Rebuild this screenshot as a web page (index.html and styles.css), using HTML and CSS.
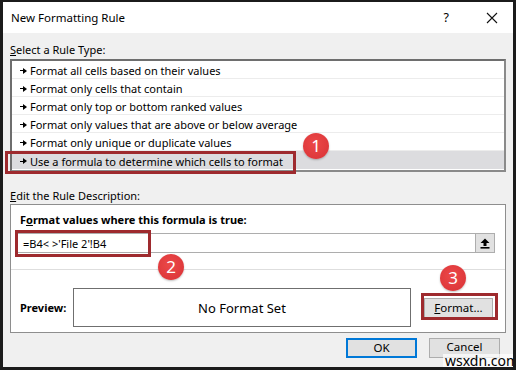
FILE: index.html
```html
<!DOCTYPE html>
<html lang="en">
<head>
  <meta charset="UTF-8">
  <title>New Formatting Rule</title>
  <link rel="stylesheet" href="styles.css">
</head>
<body>

<div class="dialog">

  <!-- Barra de título -->
  <div class="titlebar">
    <span class="title">New Formatting Rule</span>
    <span class="help">?</span>
    <svg class="close" width="12" height="12" viewBox="0 0 12 12">
      <path d="M1 1 L11 11 M11 1 L1 11" stroke="#111" stroke-width="1.1" fill="none"/>
    </svg>
  </div>

  <div class="content">
    <div class="label"><u>S</u>elect a Rule Type:</div>

    <div class="rule-list">
      <div class="rule"><span class="bullet"></span>Format all cells based on their values</div>
      <div class="rule"><span class="bullet"></span>Format only cells that contain</div>
      <div class="rule"><span class="bullet"></span>Format only top or bottom ranked values</div>
      <div class="rule"><span class="bullet"></span>Format only values that are above or below average</div>
      <div class="rule"><span class="bullet"></span>Format only unique or duplicate values</div>
      <div class="rule selected"><span class="bullet"></span>Use a formula to determine which cells to format</div>
    </div>

    <div class="label edit-label"><u>E</u>dit the Rule Description:</div>

    <div class="desc">
      <div class="formula-title">F<u>o</u>rmat values where this formula is true:</div>
      <div class="formula-row">
        <div class="formula-input">=B4&lt; &gt;'File 2'!B4</div>
        <div class="collapse-btn">
          <svg width="10" height="11" viewBox="0 0 10 11">
            <path d="M5 0.5 L9.5 5 L6.5 5 L6.5 8 L3.5 8 L3.5 5 L0.5 5 Z" fill="#000"/>
            <rect x="0.5" y="9" width="9" height="1.6" fill="#000"/>
          </svg>
        </div>
      </div>
      <div class="separator"></div>
      <div class="preview-row">
        <span class="preview-label">Preview:</span>
        <div class="preview-box">No Format Set</div>
        <div class="btn format-btn"><u>F</u>ormat...</div>
      </div>
    </div>

    <div class="buttons">
      <div class="btn ok-btn">OK</div>
      <div class="btn cancel-btn">Cancel</div>
    </div>
  </div>

  <!-- Anotaciones -->
  <div class="mark mark-rule"></div>
  <div class="mark mark-formula"></div>
  <div class="mark mark-format"></div>
  <div class="badge badge-1">1</div>
  <div class="badge badge-2">2</div>
  <div class="badge badge-3">3</div>
  <div class="watermark">wsxdn.com</div>
</div>

</body>
</html>
```

FILE: styles.css
```css
body {
  margin: 0;
  background: #000;
  font-family: "Noto Sans", "Open Sans", sans-serif;
  font-size: 11px;
  color: #000;
}

.dialog {
  position: relative;
  width: 516px;
  height: 370px;
  box-sizing: border-box;
  border: 3px solid #1b1b1b;
  border-top-width: 2px;
  background: #f0f0f0;
  overflow: hidden;
}

.titlebar {
  height: 31px;
  background: #fff;
  display: flex;
  align-items: center;
  padding-left: 8px;
}

.title {
  flex: 1;
  font-size: 11.5px;
}

.help {
  font-size: 12.5px;
  margin-right: 37px;
}

.close {
  margin-right: 15px;
}

.content {
  padding: 0 7px;
}

.label {
  height: 26px;
  line-height: 34px;
}

.edit-label {
  height: 32px;
  line-height: 48px;
}

.rule-list {
  height: 113px;
  box-sizing: border-box;
  background: #fff;
  border: 2px solid #6e6e6e;
  border-right-color: #8a8a8a;
  border-bottom-color: #8a8a8a;
}

.rule {
  height: 18px;
  box-sizing: border-box;
  padding: 2px 0 0 8px;
  border-bottom: 1px solid #ececec;
  display: flex;
  align-items: center;
}

.rule.selected {
  background: #dcdcdf;
  border-bottom: none;
}

.bullet {
  width: 7px;
  height: 5px;
  margin-right: 3px;
  background: linear-gradient(#000, #000) 0 2px / 4px 1px no-repeat;
  position: relative;
}

.bullet::after {
  content: '';
  position: absolute;
  right: 0;
  top: -0.5px;
  border-left: 4px solid #000;
  border-top: 3px solid transparent;
  border-bottom: 3px solid transparent;
}

.desc {
  height: 129px;
  box-sizing: border-box;
  border: 1px solid #8e8e8e;
  background: #fff;
  padding: 6px 10px 0 5px;
}

.formula-title {
  font-weight: bold;
  padding-left: 4px;
  height: 16px;
  line-height: 18px;
}

.formula-row {
  display: flex;
  margin-top: 6px;
  height: 20px;
}

.formula-input {
  flex: 1;
  border: 1px solid #adadad;
  border-right: none;
  padding-left: 6px;
  line-height: 19px;
}

.collapse-btn {
  width: 18px;
  background: #e1e1e1;
  border: 1px solid #adadad;
  display: flex;
  align-items: center;
  justify-content: center;
}

.separator {
  height: 1px;
  background: #dedede;
  margin: 16px -10px 0 -5px;
}

.preview-row {
  display: flex;
  align-items: center;
  margin-top: 18px;
}

.preview-label {
  font-weight: bold;
  width: 53px;
  padding-left: 4px;
}

.preview-box {
  width: 336px;
  height: 37px;
  border: 1px solid #6f6f6f;
  display: flex;
  align-items: center;
  justify-content: center;
  font-size: 13px;
}

.btn {
  width: 71px;
  height: 20px;
  box-sizing: border-box;
  background: #e1e1e1;
  border: 1px solid #adadad;
  text-align: center;
  line-height: 18px;
  font-size: 11.5px;
}

.format-btn {
  margin-left: 13px;
  width: 69px;
}

.buttons {
  display: flex;
  justify-content: flex-end;
  gap: 12px;
  margin-top: 5px;
  padding-right: 6px;
}

.btn.ok-btn {
  border: 2px solid #0078d7;
  line-height: 16px;
}

.btn.cancel-btn {
  line-height: 15px;
}

/* Anotaciones */
.mark {
  position: absolute;
  border: 3px solid #9e2a2e;
  box-sizing: border-box;
}

.mark-rule {
  left: 2px;
  top: 149px;
  width: 291px;
  height: 23px;
}

.mark-formula {
  left: 12px;
  top: 228px;
  width: 136px;
  height: 27px;
}

.mark-format {
  left: 418px;
  top: 291px;
  width: 77px;
  height: 27px;
}

.badge {
  position: absolute;
  width: 26px;
  height: 26px;
  border-radius: 50%;
  background: radial-gradient(circle at 45% 40%, #ec4848 0%, #d83236 100%);
  box-shadow: 0 1px 2px rgba(0, 0, 0, 0.25);
  color: #fff;
  text-align: center;
  line-height: 26px;
  font-size: 17px;
}

.badge-1 { left: 300px; top: 131px; }
.badge-2 { left: 155px; top: 252px; }
.badge-3 { left: 437px; top: 263px; }

.watermark {
  position: absolute;
  left: 440px;
  top: 352px;
  padding: 0 2px;
  background: rgba(255, 255, 255, 0.7);
  font-size: 14px;
  line-height: 13px;
}
```
